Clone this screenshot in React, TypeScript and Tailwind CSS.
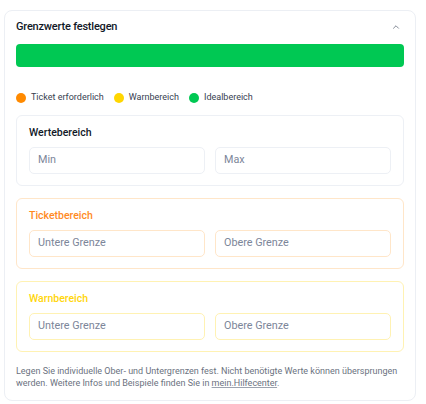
import { ChevronUp } from "lucide-react";

type RangeBoxProps = {
  title: string;
  titleClass: string;
  borderClass: string;
  placeholders: [string, string];
};

function RangeBox({ title, titleClass, borderClass, placeholders }: RangeBoxProps) {
  return (
    <section className={`rounded-md border bg-white px-3 pt-[10px] pb-[11px] ${borderClass}`}>
      <h4 className={`text-[10.5px] leading-[14px] font-medium ${titleClass}`}>{title}</h4>
      <div className="mt-[7px] grid grid-cols-2 gap-[10px]">
        {placeholders.map((p) => (
          <div
            key={p}
            className={`flex h-[27px] items-center rounded-[5px] border pl-[8px] text-[10.8px] text-[#7c8699] ${borderClass}`}
          >
            {p}
          </div>
        ))}
      </div>
    </section>
  );
}

const legend = [
  { label: "Ticket erforderlich", dot: "bg-[#ff8a00]" },
  { label: "Warnbereich", dot: "bg-[#ffd600]" },
  { label: "Idealbereich", dot: "bg-[#00c853]" },
];

export default function App() {
  return (
    <div className="min-h-[404px] bg-white pt-[10px] pl-[4px] font-['Roboto',sans-serif]">
      <div className="w-[412px] rounded-lg border border-[#eceff4] bg-white px-[11px] pt-[8px] pb-[11px]">
        <div className="flex h-4 items-center justify-between">
          <h3 className="text-[11px] leading-4 font-medium tracking-[-0.2px] text-[#111827]">
            Grenzwerte festlegen
          </h3>
          <span className="flex h-4 w-4 items-center justify-center">
            <ChevronUp size={10} strokeWidth={2} className="text-[#6b7280]" />
          </span>
        </div>

        <div className="mt-[9px] h-[23px] rounded-[4px] bg-[#00c853]" />

        <div className="mt-[24px] flex h-[14px] items-center gap-[10px] text-[9px] text-[#374151]">
          {legend.map((l) => (
            <span key={l.label} className="flex items-center gap-[5px]">
              <span className={`h-[10px] w-[10px] rounded-full ${l.dot}`} />
              {l.label}
            </span>
          ))}
        </div>

        <div className="mt-[10px] flex flex-col gap-[12px]">
          <RangeBox
            title="Wertebereich"
            titleClass="text-[#111827]"
            borderClass="border-[#edf0f5]"
            placeholders={["Min", "Max"]}
          />
          <RangeBox
            title="Ticketbereich"
            titleClass="text-[#ff8a1f]"
            borderClass="border-[#ffe6c9]"
            placeholders={["Untere Grenze", "Obere Grenze"]}
          />
          <RangeBox
            title="Warnbereich"
            titleClass="text-[#ffd60a]"
            borderClass="border-[#fff2b3]"
            placeholders={["Untere Grenze", "Obere Grenze"]}
          />
        </div>

        <p className="mt-[13px] text-[9px] leading-[12px] whitespace-nowrap text-[#6b7280]">
          Legen Sie individuelle Ober- und Untergrenzen fest. Nicht benötigte Werte können übersprungen
          <br />
          werden. Weitere Infos und Beispiele finden Sie in{" "}
          <a className="underline decoration-[#9ca3af]">mein.Hilfecenter</a>.
        </p>
      </div>
    </div>
  );
}
